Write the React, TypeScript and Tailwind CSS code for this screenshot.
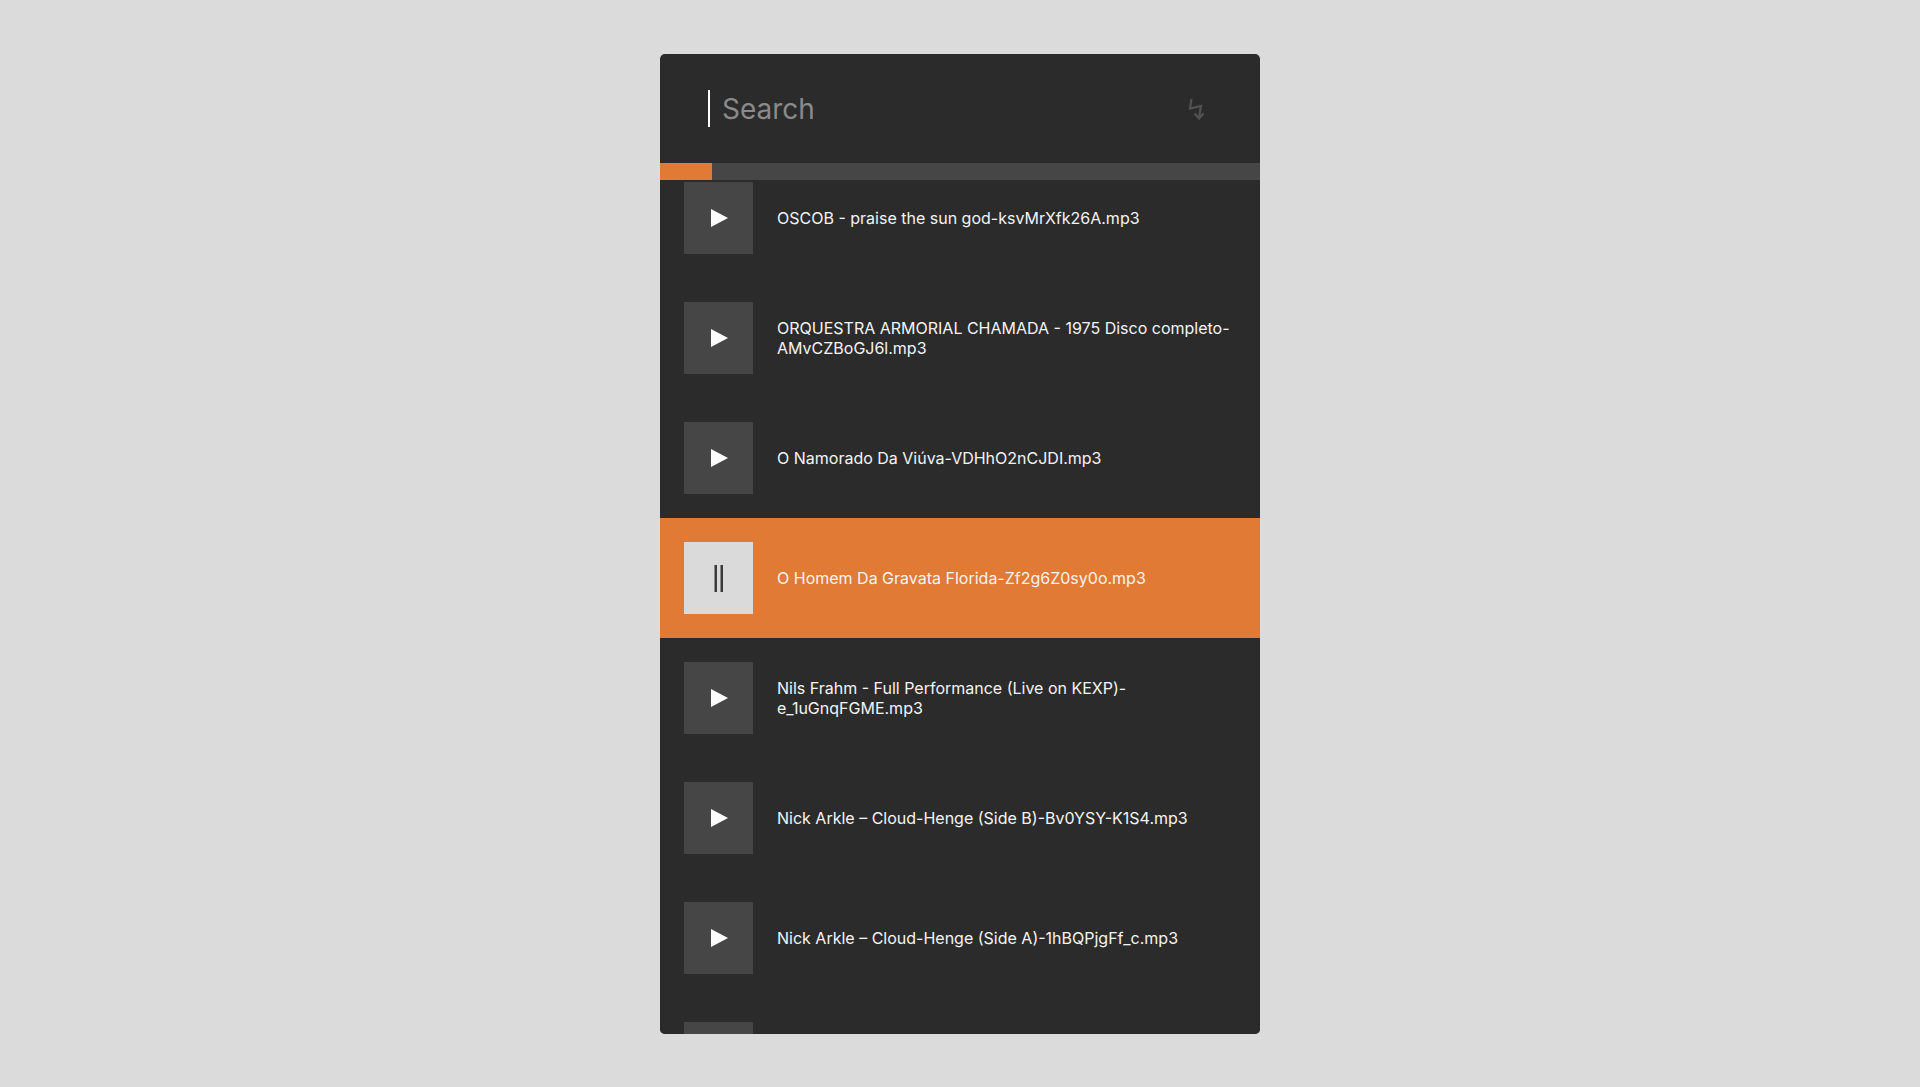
import React from 'react';

type Track = { title: string };

const tracks: Track[] = [
  { title: 'OSCOB - praise the sun god-ksvMrXfk26A.mp3' },
  { title: 'ORQUESTRA ARMORIAL CHAMADA - 1975 Disco completo-AMvCZBoGJ6l.mp3' },
  { title: 'O Namorado Da Viúva-VDHhO2nCJDI.mp3' },
  { title: 'O Homem Da Gravata Florida-Zf2g6Z0sy0o.mp3' },
  { title: 'Nils Frahm - Full Performance (Live on KEXP)-e_1uGnqFGME.mp3' },
  { title: 'Nick Arkle – Cloud-Henge (Side B)-Bv0YSY-K1S4.mp3' },
  { title: 'Nick Arkle – Cloud-Henge (Side A)-1hBQPjgFf_c.mp3' },
  // next item is scrolled below the fold, only its button peeks out
  { title: '' },
];

const activeIndex = 3;

function PlayIcon() {
  return (
    <svg width="20" height="20" viewBox="0 0 20 20">
      <polygon points="2,1 19,10 2,19" fill="#ffffff" />
    </svg>
  );
}

function PauseIcon() {
  return (
    <svg width="10" height="27" viewBox="0 0 10 27">
      <rect x="0.5" y="0" width="2.5" height="27" fill="#3a3a3a" />
      <rect x="6.5" y="0" width="2.5" height="27" fill="#3a3a3a" />
    </svg>
  );
}

// zigzag "shuffle" glyph in the search bar
function ZigzagIcon() {
  return (
    <svg width="17" height="22" viewBox="0 0 17 22" fill="none" stroke="#525252" strokeWidth="2.2">
      <path d="M3.5 1 L2 10.5 L13 8 L11 20" />
      <path d="M6.5 15.5 L11 20.5 L15.5 15.5" />
    </svg>
  );
}

function TrackRow({ track, active }: { track: Track; active: boolean }) {
  return (
    <div
      className={`flex h-[120px] shrink-0 items-center gap-6 px-6 ${
        active ? 'bg-[#e07a34]' : 'bg-[#2b2b2b]'
      }`}
    >
      <button
        className={`flex h-[72px] w-[69px] shrink-0 items-center justify-center ${
          active ? 'bg-[#dadada]' : 'bg-[#464646]'
        }`}
      >
        {active ? <PauseIcon /> : <PlayIcon />}
      </button>
      <p className="min-w-0 flex-1 text-[16px] leading-[20px] text-[#f4f4f4]">
        {track.title}
      </p>
    </div>
  );
}

export default function App() {
  return (
    <div className="flex min-h-screen justify-center bg-[#dbdbdb] pt-[54px] font-['Inter',sans-serif]">
      <div className="flex h-[980px] w-[600px] flex-col overflow-hidden rounded-[5px] bg-[#2b2b2b]">
        {/* Search */}
        <div className="flex h-[109px] shrink-0 items-center justify-between pl-12 pr-[55px]">
          <div className="flex h-[37px] items-center border-l-2 border-white pl-3">
            <span className="text-[28px] leading-none text-[#8a8a8a]">Search</span>
          </div>
          <ZigzagIcon />
        </div>

        {/* Progress */}
        <div className="h-[17px] shrink-0 bg-[#464646]">
          <div className="h-full w-[52px] bg-[#e07a34]" />
        </div>

        {/* List */}
        <div className="flex-1 overflow-hidden">
          <div className="-mt-[22px] flex flex-col">
            {tracks.map((t, i) => (
              <TrackRow key={i} track={t} active={i === activeIndex} />
            ))}
          </div>
        </div>
      </div>
    </div>
  );
}
